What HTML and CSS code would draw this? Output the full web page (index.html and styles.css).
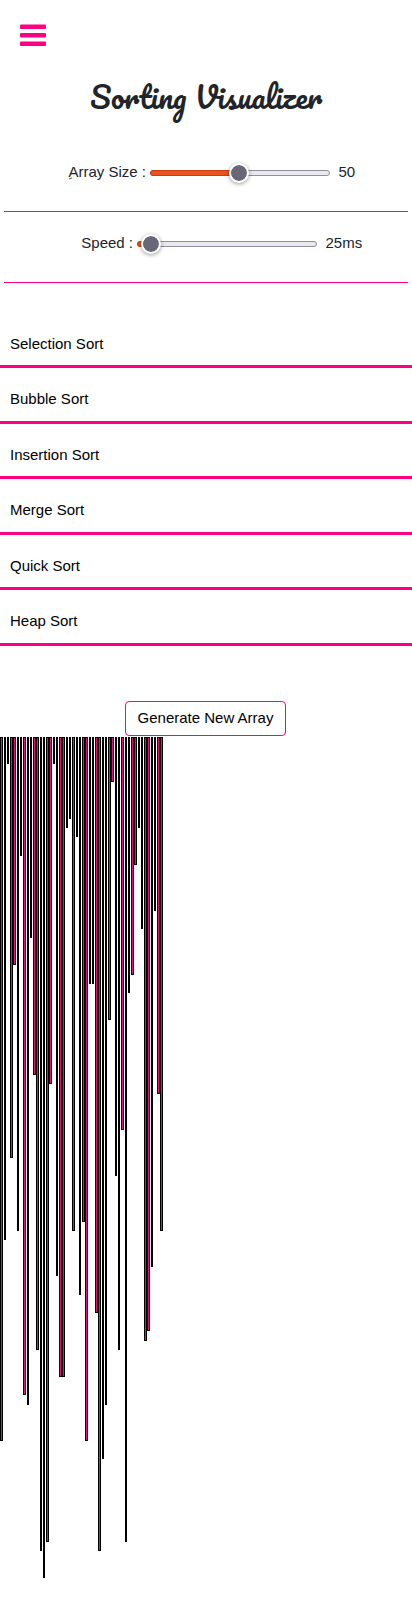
FILE: index.html
```
<!DOCTYPE html>
<html lang="en">
<head>
<meta charset="utf-8">
<title>Sorting Visualizer</title>
<link rel="stylesheet" href="styles.css">
</head>
<body>
<nav class="nav">
  <svg class="menu" viewBox="0 0 26 22"><rect y=".6" width="26" height="4.4" rx="1"/><rect y="9" width="26" height="4.4" rx="1"/><rect y="17.6" width="26" height="4.4" rx="1"/></svg>
</nav>
<h1 class="title">Sorting Visualizer</h1>
<div class="controls">
  <div class="control size"><label><span class="initial">A</span>rray Size :</label><div class="track"><div class="fill"></div><div class="thumb"></div></div><span class="value">50</span></div>
  <div class="control speed"><label>Speed :</label><div class="track"><div class="fill"></div><div class="thumb"></div></div><span class="value">25ms</span></div>
</div>
<div class="algorithms">
  <button>Selection Sort</button>
  <button>Bubble Sort</button>
  <button>Insertion Sort</button>
  <button>Merge Sort</button>
  <button>Quick Sort</button>
  <button>Heap Sort</button>
</div>
<button class="generate">Generate New Array</button>
<div class="bars" id="bars"></div>
<script src="script.js"></script>
</body>
</html>
```
FILE: styles.css
```
* { box-sizing: border-box; }
body { margin: 0; background: #fff; color: #212529; font: 15px/20px "Liberation Sans", Arial, sans-serif; overflow-x: hidden; }
button { font: inherit; color: #000; background: #fff; margin: 0; }
.nav { height: 72px; padding: 24px 20px 0; }
.menu { display: block; width: 26px; height: 22px; fill: #ff0080; }
.title { margin: 0; height: 78px; line-height: 50px; text-align: center; font-family: Pacifico, cursive; font-weight: 500; font-size: 30px; white-space: nowrap; }
.controls { padding: 0 4px; }
.control { display: flex; align-items: center; height: 71px; border-bottom: 1px solid #ff0080; }
.size { height: 62px; padding: 0 0 17px 64.5px; }
.speed { padding: 0 0 8px 77.3px; }
.control label { white-space: nowrap; }
.initial { position: relative; }
.initial::after { content: ""; position: absolute; left: 0; bottom: 1.5px; width: 3px; height: 1px; background: #666; transform: rotate(-18deg); }
.track { position: relative; width: 180px; height: 6px; border: 1px solid #8f8f9d; border-radius: 3px; background: #e9e9ed; margin: 2px 8.5px 0 4px; flex: none; }
.fill { position: absolute; left: -1px; top: -1px; height: 6px; width: 90px; border: 1px solid #cd3e0d; border-radius: 3px 0 0 3px; background: #e95420; }
.speed .fill { width: 14px; }
.thumb { position: absolute; left: 78px; top: -8px; width: 20px; height: 20px; border: 2px solid #fff; border-radius: 50%; background: #686777 padding-box; box-shadow: 0 1px 4px rgba(0,0,0,.4); }
.speed .thumb { left: 3px; }
.algorithms { display: grid; grid-template-rows: repeat(6, 55.5px); padding-top: 29.8px; }
.algorithms button { border: 0; border-bottom: 3px solid #ff0080; text-align: left; padding: 13.4px 10px 4px; }
.generate { display: block; width: 161px; height: 35px; margin: 55.2px 0 1px 125px; padding: 0; border: 1px solid #ff0080; border-radius: 4px; }
.bars { display: flex; align-items: flex-start; height: 881px; }
.bar { flex: none; width: 2px; margin-left: 1px; border: 1px solid #000; background: #ff0080; }
.bar.wide { width: 3px; }
.bar.wide + .wide, .bar:first-child { margin-left: 0; }
```
FILE: script.js
```
const values = [77, 55, 3, 46, 25, 54, 13, 72, 73, 22, 37, 67, 89, 92, 88, 38, 3, 59, 70, 70,
  10, 9, 54, 11, 61, 53, 77, 27, 27, 63, 89, 79, 73, 31, 5, 48, 67, 43, 88, 28,
  26, 14, 10, 21, 66, 65, 58, 19, 39, 54];
const wide = new Set([0, 3, 4, 7, 10, 11, 14, 15, 18, 19, 22, 25, 26, 29, 30, 33, 34, 37, 40, 41, 44, 45, 48, 49]);
const bars = document.getElementById("bars");
values.forEach((value, i) => {
  const bar = document.createElement("div");
  bar.className = wide.has(i) ? "bar wide" : "bar";
  bar.style.height = Math.round(value * 9.148 - 0.25) + "px";
  bars.appendChild(bar);
});
```
